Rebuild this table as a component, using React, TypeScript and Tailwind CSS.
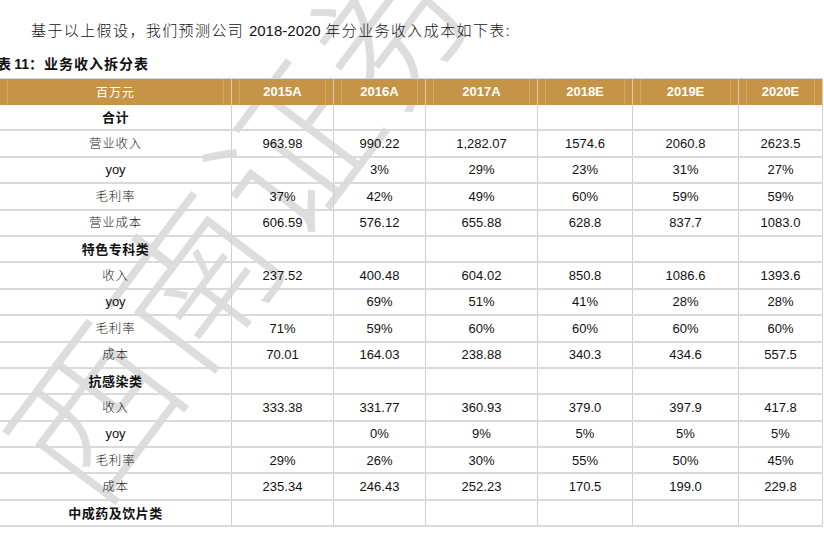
import React from "react";

const cols = ["w-[232px]", "w-[102px]", "w-[92px]", "w-[112px]", "w-[95px]", "w-[106px]", "w-[84px]"];
const years = ["2015A", "2016A", "2017A", "2018E", "2019E", "2020E"];

interface Row {
  label: string;
  bold?: boolean;
  vals?: string[];
}

const rows: Row[] = [
  { label: "合计", bold: true },
  { label: "营业收入", vals: ["963.98", "990.22", "1,282.07", "1574.6", "2060.8", "2623.5"] },
  { label: "yoy", vals: ["", "3%", "29%", "23%", "31%", "27%"] },
  { label: "毛利率", vals: ["37%", "42%", "49%", "60%", "59%", "59%"] },
  { label: "营业成本", vals: ["606.59", "576.12", "655.88", "628.8", "837.7", "1083.0"] },
  { label: "特色专科类", bold: true },
  { label: "收入", vals: ["237.52", "400.48", "604.02", "850.8", "1086.6", "1393.6"] },
  { label: "yoy", vals: ["", "69%", "51%", "41%", "28%", "28%"] },
  { label: "毛利率", vals: ["71%", "59%", "60%", "60%", "60%", "60%"] },
  { label: "成本", vals: ["70.01", "164.03", "238.88", "340.3", "434.6", "557.5"] },
  { label: "抗感染类", bold: true },
  { label: "收入", vals: ["333.38", "331.77", "360.93", "379.0", "397.9", "417.8"] },
  { label: "yoy", vals: ["", "0%", "9%", "5%", "5%", "5%"] },
  { label: "毛利率", vals: ["29%", "26%", "30%", "55%", "50%", "45%"] },
  { label: "成本", vals: ["235.34", "246.43", "252.23", "170.5", "199.0", "229.8"] },
  { label: "中成药及饮片类", bold: true },
];

const cjk = "font-['Noto_Sans_CJK_SC',sans-serif]";
const arial = "font-['Liberation_Sans','Noto_Sans_CJK_SC',sans-serif]";

export default function App() {
  return (
    <div className="relative w-[824px] h-[537px] overflow-hidden bg-white">
      {/* watermark */}
      <div
        className={`absolute left-[236px] top-[210px] -translate-x-1/2 -translate-y-1/2 -rotate-[53deg] whitespace-nowrap text-[162px] leading-none text-[#dddddd] font-light tracking-[2px] ${cjk}`}
      >
        西南证券
      </div>

      <div className="relative z-10">
        <div className={`mt-[19px] pl-[31px] leading-[22px] text-[15px] text-[#111] ${cjk}`}>
          <span className="font-light tracking-[1.4px]">基于以上假设，我们预测公司 </span>
          <span className={arial}>2018-2020</span>
          <span className="font-light tracking-[1.4px]"> 年分业务收入成本如下表:</span>
        </div>

        <div className={`mt-[11px] -ml-[3px] leading-[20px] text-[14px] font-bold text-[#111] ${cjk}`}>
          <span>表 </span>
          <span className={arial}>11</span>
          <span className="tracking-[1px]">：业务收入拆分表</span>
        </div>

        <div className="mt-[4px] w-[823px] border-t border-[#d6d6d6]">
          <div className="flex h-[26px] bg-[#c59446]">
            {cols.map((c, i) => (
              <div key={c} className={`${c} h-full shrink-0 border-r border-[#dccbb0]`}>
                <div
                  className={`mx-[7px] h-full flex items-center justify-center border-x border-[#d2a962] text-white ${
                    i === 0 ? `text-[12px] tracking-[1px] ${cjk}` : `text-[13px] font-bold ${arial}`
                  }`}
                >
                  {i === 0 ? "百万元" : years[i - 1]}
                </div>
              </div>
            ))}
          </div>

          {rows.map((r, ri) => (
            <div key={ri} className="flex h-[26.4px] border-b-2 border-[#dadada]">
              <div
                className={`w-[232px] shrink-0 border-r border-[#cfcfcf] flex items-center justify-center ${
                  r.label === "yoy"
                    ? `text-[13px] text-[#111] ${arial}`
                    : r.bold
                    ? `text-[13px] font-bold tracking-[0.5px] text-[#111] ${cjk}`
                    : `text-[12.5px] font-light tracking-[0.8px] text-[#222] ${cjk}`
                }`}
              >
                {r.label}
              </div>
              {cols.slice(1).map((c, ci) => (
                <div
                  key={c}
                  className={`${c} shrink-0 border-r border-[#cfcfcf] flex items-center justify-center text-[13px] text-[#111] ${arial}`}
                >
                  {r.vals ? r.vals[ci] : ""}
                </div>
              ))}
            </div>
          ))}
        </div>
      </div>
    </div>
  );
}
